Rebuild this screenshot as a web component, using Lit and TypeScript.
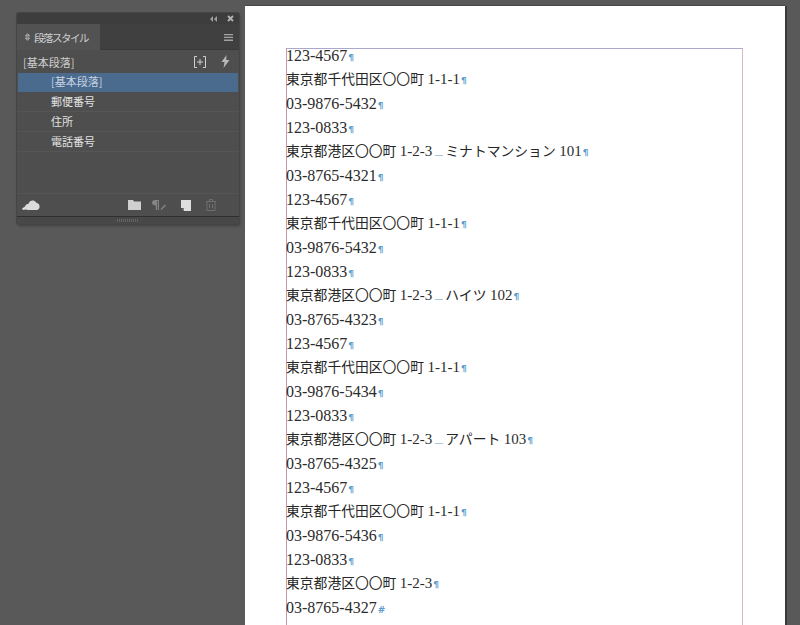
import { LitElement, html, css } from "lit";
import { customElement } from "lit/decorators.js";

type Line = { t: string; kind: "num" | "addr"; extra?: string; end?: string };

const lines: Line[] = [
  { t: "123-4567", kind: "num" },
  { t: "東京都千代田区〇〇町 1-1-1", kind: "addr" },
  { t: "03-9876-5432", kind: "num" },
  { t: "123-0833", kind: "num" },
  { t: "東京都港区〇〇町 1-2-3", kind: "addr", extra: "ミナトマンション 101" },
  { t: "03-8765-4321", kind: "num" },
  { t: "123-4567", kind: "num" },
  { t: "東京都千代田区〇〇町 1-1-1", kind: "addr" },
  { t: "03-9876-5432", kind: "num" },
  { t: "123-0833", kind: "num" },
  { t: "東京都港区〇〇町 1-2-3", kind: "addr", extra: "ハイツ 102" },
  { t: "03-8765-4323", kind: "num" },
  { t: "123-4567", kind: "num" },
  { t: "東京都千代田区〇〇町 1-1-1", kind: "addr" },
  { t: "03-9876-5434", kind: "num" },
  { t: "123-0833", kind: "num" },
  { t: "東京都港区〇〇町 1-2-3", kind: "addr", extra: "アパート 103" },
  { t: "03-8765-4325", kind: "num" },
  { t: "123-4567", kind: "num" },
  { t: "東京都千代田区〇〇町 1-1-1", kind: "addr" },
  { t: "03-9876-5436", kind: "num" },
  { t: "123-0833", kind: "num" },
  { t: "東京都港区〇〇町 1-2-3", kind: "addr" },
  { t: "03-8765-4327", kind: "num", end: "#" },
];

@customElement("app-root")
export class AppRoot extends LitElement {
  static styles = css`
    :host {
      display: block;
      width: 800px;
      height: 625px;
      overflow: hidden;
      position: relative;
      background: #595959;
    }
    .sheet {
      margin-left: 245px;
      width: 540px;
      height: 619px;
      position: relative;
      top: 6px;
      background: #fff;
      box-shadow: 2px 0 0 #3a3a3a, 0 -1px 0 #484848;
      padding: 42px 42px 0 41px;
      box-sizing: border-box;
    }
    .frame {
      height: 600px;
      border: 1px solid #c99aa6;
      border-top-color: #aaa8cc;
      border-right-color: #cfbcc4;
      box-sizing: border-box;
    }
    .text {
      margin: -5px 0 0 -1px;
      color: #262626;
      font-family: "Liberation Serif", "Noto Sans CJK JP", serif;
    }
    .line {
      height: 24px;
      line-height: 24px;
      white-space: nowrap;
      display: flex;
      align-items: center;
      box-sizing: border-box;
    }
    .num { font-size: 16px; color: #2b2b2b; }
    .addr { font-size: 13.8px; font-weight: 400; padding-bottom: 2px; }
    .lat { font-size: 15px; color: #2b2b2b; }
    .mark {
      color: #5b9ccb;
      font-size: 9px;
      font-family: "DejaVu Sans", sans-serif;
      font-weight: 700;
      margin: 3px 0 0 1px;
    }
    .sp {
      display: inline-block;
      width: 8px;
      height: 1px;
      background: #a8c8de;
      margin: 9px 2px 0 3px;
    }
    .panel {
      position: absolute;
      left: 17px;
      top: 13px;
      width: 222px;
      height: 211px;
      background: #4e4e4e;
      box-shadow: 0 0 0 1px #454545, 1px 2px 3px rgba(0,0,0,.3);
      border-radius: 2px;
      display: flex;
      flex-direction: column;
      font-family: "Noto Sans CJK JP", sans-serif;
      color: #d8d8d8;
      font-size: 11px;
    }
    .titlebar {
      height: 11px;
      background: #3d3d3d;
      display: flex;
      align-items: center;
      justify-content: flex-end;
      gap: 10px;
      padding-right: 5px;
      border-radius: 2px 2px 0 0;
    }
    .titlebar svg { display: block; }
    .tabs {
      height: 26px;
      background: #404040;
      display: flex;
      align-items: stretch;
      justify-content: space-between;
      box-shadow: inset 0 -1px 0 #3a3a3a;
    }
    .tab {
      width: 83px;
      background: #525252;
      display: flex;
      align-items: center;
      gap: 4px;
      padding-left: 8px;
      box-sizing: border-box;
      font-size: 10.5px;
      letter-spacing: -1.5px;
      color: #d0d0d0;
    }
    .menu { display: flex; align-items: center; padding-right: 6px; }
    .head {
      height: 23px;
      display: flex;
      align-items: center;
      justify-content: space-between;
      padding: 0 9px 0 6px;
      color: #cfcfcf;
    }
    .head-icons { display: flex; gap: 15px; align-items: center; }
    .rows { flex: 1; display: flex; flex-direction: column; }
    .row {
      height: 20px;
      line-height: 19px;
      padding-left: 34px;
      border-bottom: 1px solid #555;
      box-sizing: border-box;
      color: #e2e2e2;
    }
    .row.sel {
      height: 19px;
      line-height: 17px;
      margin: 0 1px;
      padding-left: 33px;
      background: #4a6a8e;
      color: #c6d3e2;
      border-bottom-color: #4a6a8e;
    }
    .foot {
      height: 23px;
      display: flex;
      align-items: center;
      padding: 0 23px 0 5px;
      border-top: 1px solid #555;
      box-sizing: border-box;
    }
    .foot .cloud { margin-right: auto; }
    .foot .para { margin: 0 14px 0 11px; }
    .foot .trash { margin-left: 15px; }
    .grip {
      height: 8px;
      background: #484848;
      border-top: 1px solid #2f2f2f;
      box-sizing: border-box;
      display: flex;
      justify-content: center;
      align-items: center;
      border-radius: 0 0 2px 2px;
    }
    .grip i {
      width: 22px;
      height: 3px;
      background: repeating-linear-gradient(90deg, #636363 0 1px, transparent 1px 2px);
    }
  `;

  mixed(s: string) {
    const [jp, lat] = s.split(" ");
    return html`<span>${jp} <span class="lat">${lat}</span></span>`;
  }

  renderLine(l: Line) {
    return html`<div class="line ${l.kind}">
      ${l.kind === "addr" ? this.mixed(l.t) : html`<span>${l.t}</span>`}
      ${l.extra ? html`<span class="sp"></span>${this.mixed(l.extra)}` : ""}
      <span class="mark">${l.end ?? "¶"}</span>
    </div>`;
  }

  render() {
    return html`
      <div class="sheet">
        <div class="frame">
          <div class="text">${lines.map((l) => this.renderLine(l))}</div>
        </div>
      </div>
      <div class="panel">
        <div class="titlebar">
          <svg width="8" height="6" viewBox="0 0 8 6" fill="#a0a0a0"><path d="M4 0 1 3l3 3zM8 0 5 3l3 3z"/></svg>
          <svg width="7" height="7" viewBox="0 0 7 7" stroke="#b4b4b4" stroke-width="1.8"><path d="M1 1l5 5M6 1 1 6"/></svg>
        </div>
        <div class="tabs">
          <div class="tab">
            <svg width="5" height="8" viewBox="0 0 5 8" fill="none" stroke="#c8c8c8" stroke-width=".9"><path d="M.5 3 2.500.7 4.500 3zM.5 5l2 2.300L4.500 5z"/></svg>
            <span>段落スタイル</span>
          </div>
          <div class="menu">
            <svg width="9" height="7" viewBox="0 0 9 7" fill="#a2a2a2"><path d="M0 0h9v1.300H0zM0 2.800h9v1.300H0zM0 5.600h9v1.300H0z"/></svg>
          </div>
        </div>
        <div class="head">
          <span>[基本段落]</span>
          <span class="head-icons">
            <svg width="12" height="12" viewBox="0 0 12 12" fill="none" stroke="#cfcfcf"><path d="M3 .5H.5v11H3M9 .5h2.500v11H9M6 3v6M3 6h6" /></svg>
            <svg width="9" height="13" viewBox="0 0 9 13" fill="#b8b8b8"><path d="M5.500 0 .5 7h3L2.500 13 8.500 5h-3.300z"/></svg>
          </span>
        </div>
        <div class="rows">
          <div class="row sel">[基本段落]</div>
          <div class="row">郵便番号</div>
          <div class="row">住所</div>
          <div class="row">電話番号</div>
        </div>
        <div class="foot">
          <svg class="cloud" width="18" height="12" viewBox="0 0 18 12" fill="#dcdcdc"><path d="M0 9.500 3 7.500C3.500 5.500 5 5 6.500 5 7 1.500 12 0 14 3.500 16.500 4 18 6 17.500 8.500 17 10.500 15.500 11 14 11H6L3.500 10.500 1 11z"/></svg>
          <svg width="13" height="10" viewBox="0 0 13 10" fill="#cfcfcf"><path d="M0 0h5l1 1.500h7V10H0z"/></svg>
          <svg class="para" width="15" height="10" viewBox="0 0 15 10" fill="#858585"><path d="M3 0h4v10H5.800V1H5v9H3.800V5.500C1 5.500 0 4 0 2.800 0 1 1.500 0 3 0z"/><path d="M9 8.500l4-4 1 1-4 4-1.500.3z"/></svg>
          <svg width="10" height="11" viewBox="0 0 10 11" fill="#dedede"><path d="M0 0h10v11H3V8H0z"/><path d="M1 9l2-1v3z" fill="#8a8a8a"/></svg>
          <svg class="trash" width="10" height="12" viewBox="0 0 10 12" fill="none" stroke="#6f6f6f"><path d="M0 2.500h10M3.500 2.500V.5h3v2M1 2.500v9h8v-9M3.500 5v4M6.500 5v4"/></svg>
        </div>
        <div class="grip"><i></i></div>
      </div>
    `;
  }
}
